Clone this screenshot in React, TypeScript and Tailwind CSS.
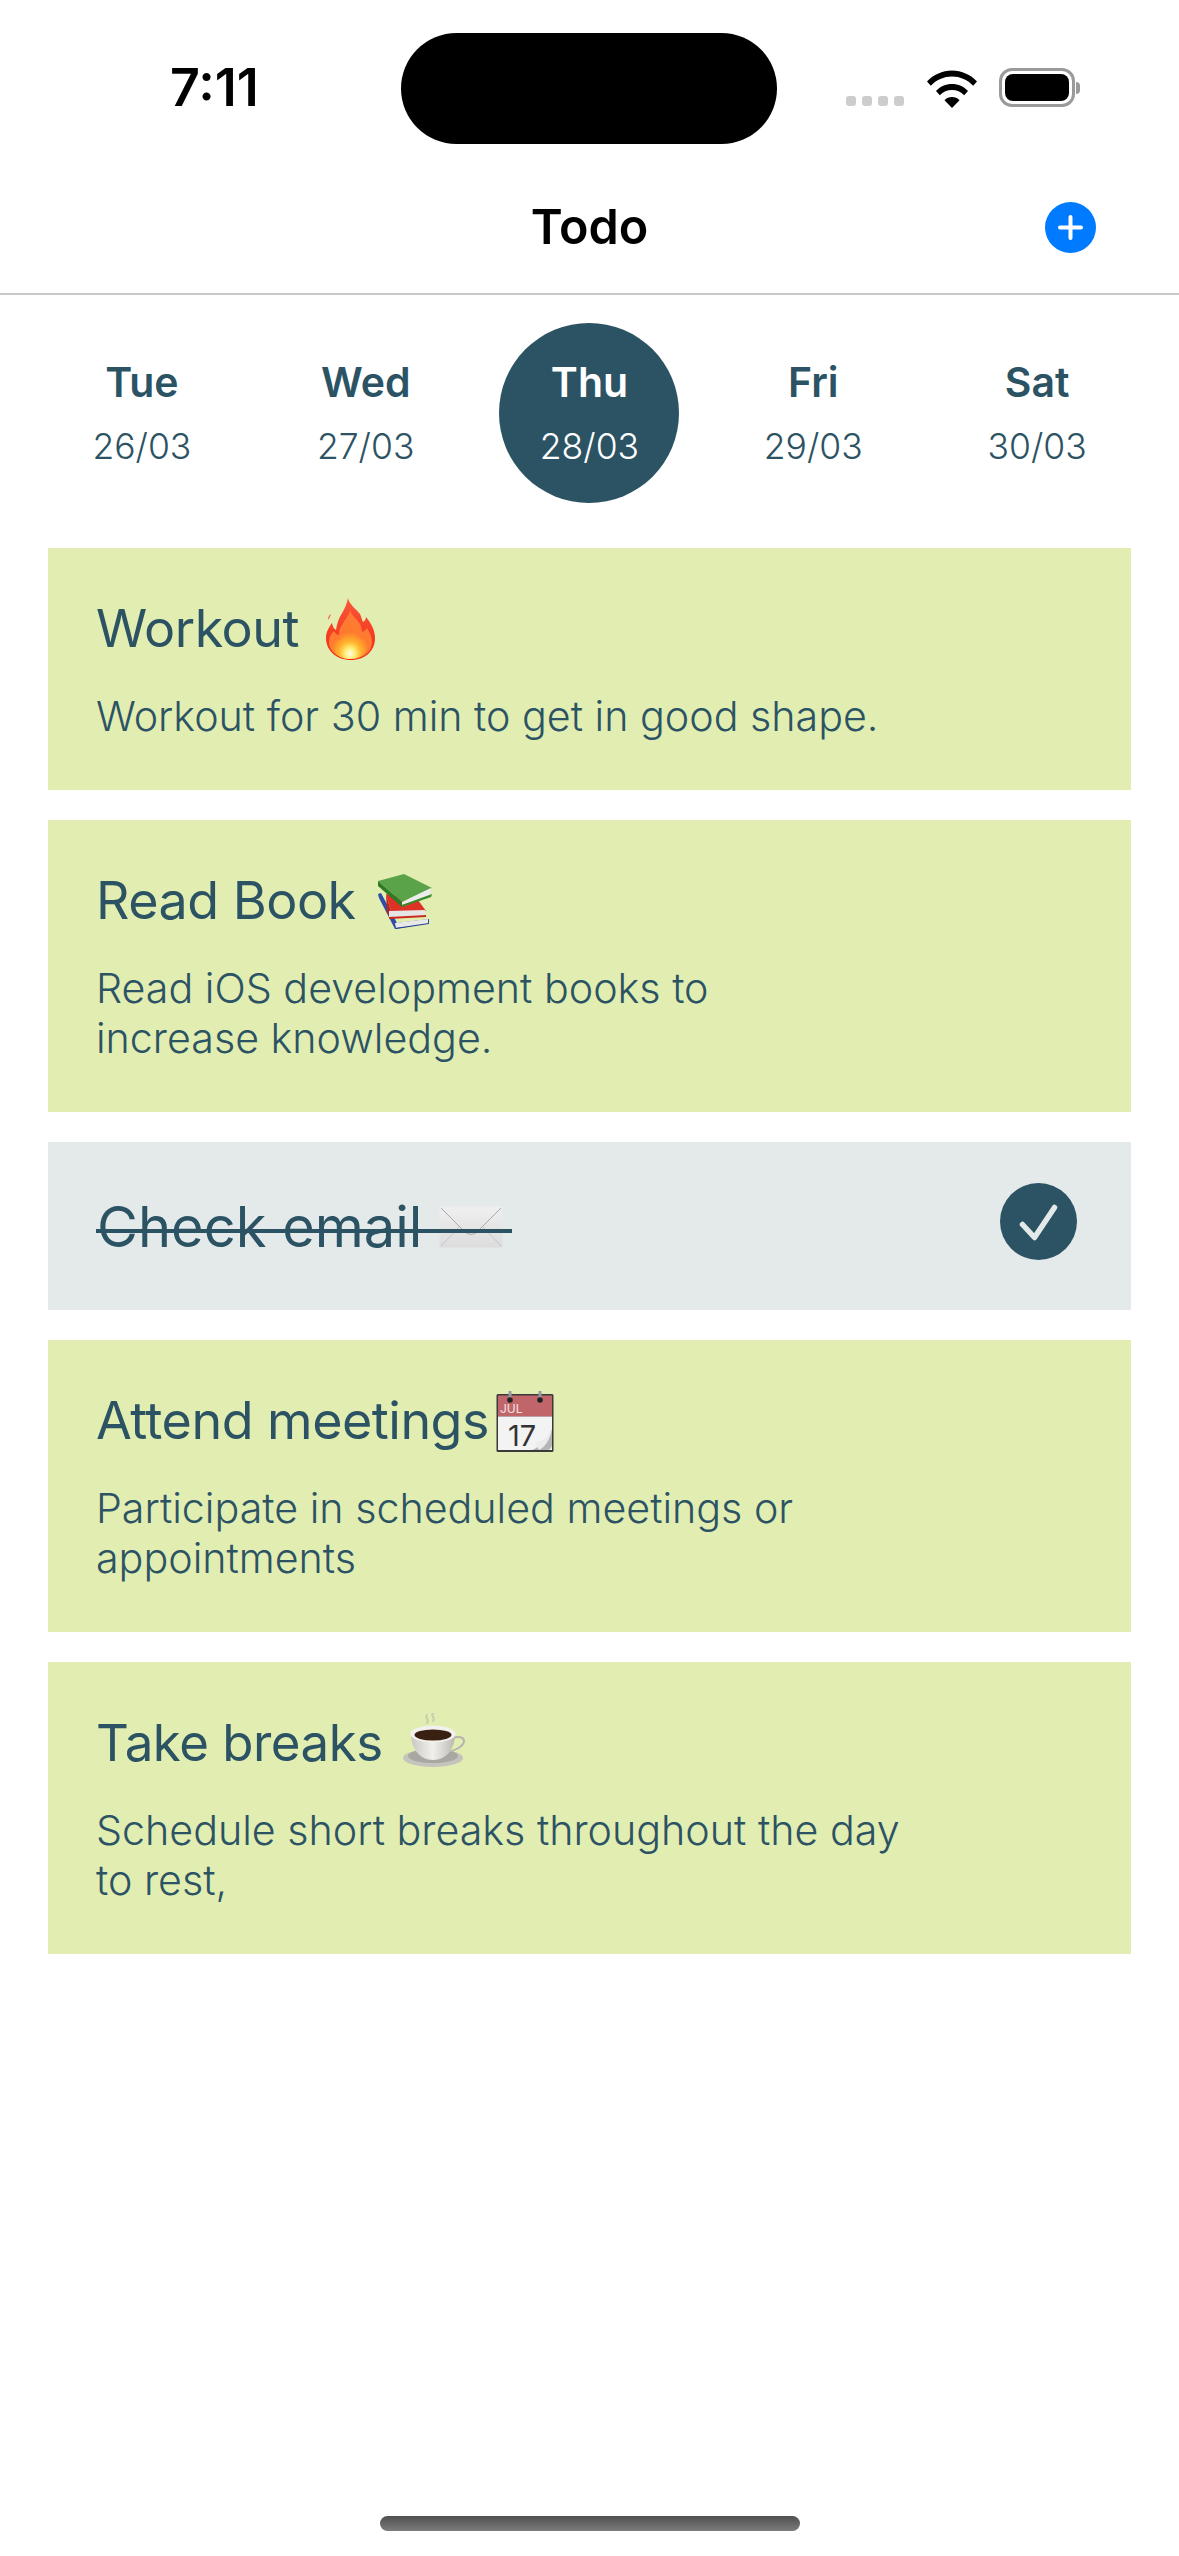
function Fire() {
  return (
    <svg width="49" height="62" viewBox="0 0 49 62" className="shrink-0">
      <defs>
        <radialGradient id="fcore" cx="0.5" cy="0.86" r="0.55">
          <stop offset="0" stopColor="#fffdf0" />
          <stop offset="0.25" stopColor="#ffef7a" />
          <stop offset="0.55" stopColor="#ffb52e" />
          <stop offset="1" stopColor="#ff7a2b" />
        </radialGradient>
        <linearGradient id="fout" x1="0" y1="0" x2="0" y2="1">
          <stop offset="0" stopColor="#f9583a" />
          <stop offset="1" stopColor="#f32a10" />
        </linearGradient>
      </defs>
      <path d="M5 16c-1 3-2 5-3 6 0-3 1-5 3-6z" fill="#f7603a" />
      <path d="M22 0c1 6 7 10 12 16 1 2 2 6 3 8 2-1 3-3 3-5 5 6 9 13 9 21 0 13-10 22-24 22S0 53 0 40c0-6 3-11 6-15 1 4 2 6 4 7 1-6 2-10 5-15 3-5 6-11 7-17z" fill="url(#fout)" />
      <path d="M24 11c0 5 6 9 10 15 1 3 2 5 2 8 2-1 4-2 5-4 3 5 5 9 5 14 0 10-9 17-21 17S3 54 3 44c0-5 2-8 5-11 1 2 3 4 5 4 0-8 5-13 8-18 2-3 3-5 3-8z" fill="#ff7a33" />
      <path d="M24 22c1 5 5 8 8 13 1 2 2 4 2 6 2-1 3-2 4-4 2 3 4 6 4 10 0 8-8 14-18 14S6 55 6 47c0-3 2-6 4-8 1 2 2 3 4 3 0-7 4-11 7-15 2-2 3-3 3-5z" fill="url(#fcore)" />
    </svg>
  );
}

function Books() {
  return (
    <svg width="55" height="55" viewBox="0 0 55 55" className="shrink-0">
      <path d="M0 20l3-1 16 30 32-4v4L17 55 1 24z" fill="#2f4ea8" />
      <path d="M17 49l33-4v5l-32 4z" fill="#e9e9e9" />
      <path d="M17 54l34-5v1l-33 5z" fill="#24408f" />
      <path d="M8 20l32 6 8 11-34 4z" fill="#de3226" />
      <path d="M8 20l6 21v4l-5-6z" fill="#b8261c" />
      <path d="M11 37l36-1v6l-36 1z" fill="#e6e6e6" />
      <path d="M11 43l37-2v2l-37 2z" fill="#c92c20" />
      <path d="M0 7L26 0l28 14-30 14z" fill="#5ba348" />
      <path d="M0 7l24 21v5L0 12z" fill="#2f7a26" />
      <path d="M24 28l29-14-1 8-28 9z" fill="#ececec" />
      <path d="M24 31l30-11-1 3-29 10z" fill="#3a8a2d" />
    </svg>
  );
}

function Envelope() {
  return (
    <svg width="64" height="42" viewBox="0 0 64 42" className="shrink-0">
      <defs>
        <linearGradient id="env" x1="0" y1="0" x2="0" y2="1">
          <stop offset="0" stopColor="#efefef" />
          <stop offset="1" stopColor="#dcdcdc" />
        </linearGradient>
      </defs>
      <rect x="0.5" y="0.5" width="63" height="41" rx="1.5" fill="url(#env)" />
      <path d="M2 2l24 24c3 3 9 3 12 0L62 2" fill="none" stroke="#a9a9ad" strokeWidth="1" />
      <path d="M2 40l18-19M62 40L44 21" fill="none" stroke="#c4c4c6" strokeWidth="1" />
    </svg>
  );
}

function Calendar() {
  return (
    <svg width="58" height="61" viewBox="0 0 58 61" className="shrink-0">
      <rect x="0.5" y="3" width="57" height="58" rx="1.5" fill="#3a3a3a" />
      <rect x="2" y="4.500" width="54" height="21" fill="#c0666a" />
      <rect x="2" y="25.500" width="54" height="33.500" fill="#f3f3f3" />
      <rect x="12.500" y="0" width="3" height="8" fill="#9a9aa5" />
      <rect x="42.500" y="0" width="3" height="8" fill="#9a9aa5" />
      <circle cx="14" cy="9" r="2.800" fill="#222" />
      <circle cx="44" cy="9" r="2.800" fill="#222" />
      <text x="4" y="22" fontSize="12" fill="#f5e3e3" fontFamily="Inter, sans-serif">JUL</text>
      <text x="12" y="55" fontSize="29" fill="#333" fontFamily="Inter, sans-serif" fontWeight="400">17</text>
      <path d="M56 38v15c0 4-2 6-6 6H36c8-3 14-10 20-21z" fill="#b5b5b5" />
      <path d="M56 38c-4 8-10 12-17 14l4 7c6-3 11-10 13-21z" fill="#ececec" />
    </svg>
  );
}

function Coffee() {
  return (
    <svg width="62" height="54" viewBox="0 0 62 54" className="shrink-0 mb-[6px]">
      <defs>
        <linearGradient id="cup" x1="0" y1="0" x2="1" y2="0">
          <stop offset="0" stopColor="#c9c8c3" />
          <stop offset="0.5" stopColor="#f1f0ec" />
          <stop offset="1" stopColor="#b9b8b3" />
        </linearGradient>
      </defs>
      <ellipse cx="30" cy="45" rx="30" ry="9" fill="#c4c3be" />
      <ellipse cx="30" cy="43" rx="25" ry="7" fill="#a8a7a2" />
      <path d="M50 25c5-2 11-1 11 3 0 5-9 10-17 11" fill="none" stroke="#b5b4af" strokeWidth="2" />
      <path d="M8 21c0 14 8 26 22 26s22-12 22-26z" fill="url(#cup)" />
      <ellipse cx="30" cy="21" rx="22.500" ry="8.500" fill="#f2f1ed" />
      <ellipse cx="30" cy="22" rx="18.500" ry="5.500" fill="#3a2012" />
      <path d="M24 2c-3 3 3 4 0 8M30 0c-3 3 3 4 0 8" fill="none" stroke="#b9c2ae" strokeWidth="2" strokeLinecap="round" opacity="0.7" />
    </svg>
  );
}

function Wifi() {
  return (
    <svg width="50" height="38" viewBox="0 0 50 38">
      <path d="M0 11.500C6.500 4.500 15.300 0.500 25 0.500s18.500 4 25 11l-3.800 4.200C40.700 9.800 33.200 6.400 25 6.400S9.300 9.800 3.800 15.700z" fill="#000" />
      <path d="M9 21C13 16.600 18.800 14 25 14s12 2.600 16 7l-3.800 4.200C34 21.900 29.700 20 25 20s-9 1.900-12.200 5.200z" fill="#000" />
      <path d="M17.500 30.200C19.400 28.200 22.100 27 25 27s5.600 1.200 7.500 3.200L25 38z" fill="#000" />
    </svg>
  );
}

const days = [
  { name: "Tue", date: "26/03" },
  { name: "Wed", date: "27/03" },
  { name: "Thu", date: "28/03", active: true },
  { name: "Fri", date: "29/03" },
  { name: "Sat", date: "30/03" },
];

function Card({ title, icon, titleClass, lines }: { title: string; icon: React.ReactNode; titleClass: string; lines: string[] }) {
  return (
    <div className="bg-[#e2edb1] pl-[48px] pr-[48px] pt-[47px] pb-[49px] text-[#2c5364]">
      <div className="flex items-center h-[68px]">
        <span className={`leading-[68px] font-normal tracking-[-0.5px] ${titleClass}`}>{title}</span>
        {icon}
      </div>
      <div className="mt-[28px] text-[41.2px] leading-[50px] font-light">
        {lines.map((l) => (
          <div key={l} className="whitespace-nowrap">{l}</div>
        ))}
      </div>
    </div>
  );
}

export default function App() {
  return (
    <div className="w-[1179px] h-[2556px] bg-white flex flex-col font-['Inter',sans-serif] overflow-hidden">
      <div className="flex items-start h-[177px] shrink-0">
        <div className="w-[401px] pt-[60px] pl-[170px] text-[52px] leading-[56px] font-semibold text-black">7:11</div>
        <div className="mt-[33px] w-[376px] h-[111px] rounded-[56px] bg-black" />
        <div className="flex items-end pt-[68px] pl-[69px]">
          <div className="flex gap-[6px] mb-[1px]">
            <span className="w-[10px] h-[10px] rounded-[3px] bg-[#cdcdcd]" />
            <span className="w-[10px] h-[10px] rounded-[3px] bg-[#cdcdcd]" />
            <span className="w-[10px] h-[10px] rounded-[3px] bg-[#cdcdcd]" />
            <span className="w-[10px] h-[10px] rounded-[3px] bg-[#cdcdcd]" />
          </div>
          <div className="ml-[23px] mb-[-1px]"><Wifi /></div>
          <div className="ml-[22px] flex items-center">
            <div className="w-[76px] h-[39px] rounded-[13px] border-[3px] border-[#9a9a9a] p-[3px]">
              <div className="w-full h-full rounded-[8px] bg-black" />
            </div>
            <div className="w-[4px] h-[12px] rounded-r-[4px] bg-[#9a9a9a] ml-[1px]" />
          </div>
        </div>
      </div>

      <div className="relative h-[118px] shrink-0 border-b-[2px] border-[#c8c8c8] flex items-start justify-center">
        <span className="mt-[20px] text-[48.5px] leading-[60px] font-semibold text-black">Todo</span>
        <div className="absolute left-[1045px] top-[25px] w-[51px] h-[51px] rounded-full bg-[#007aff] flex items-center justify-center">
          <svg width="25" height="25" viewBox="0 0 25 25">
            <path d="M12.500 2v21M2 12.500h21" stroke="#fff" strokeWidth="4" strokeLinecap="round" />
          </svg>
        </div>
      </div>

      <div className="grid grid-cols-5 pl-[30px] pr-[30px] mt-[28px] h-[180px] shrink-0">
        {days.map((d) => (
          <div key={d.name} className="flex justify-center">
            <div className={`w-[180px] h-[180px] rounded-full flex flex-col items-center pt-[34px] ${d.active ? "bg-[#2c5364] text-white" : "text-[#2c5364]"}`}>
              <span className="text-[41px] leading-[50px] font-semibold">{d.name}</span>
              <span className="mt-[15px] text-[35.5px] leading-[50px] font-light">{d.date}</span>
            </div>
          </div>
        ))}
      </div>

      <div className="flex flex-col gap-[30px] ml-[48px] w-[1083px] mt-[45px]">
        <Card title="Workout" titleClass="text-[52px] mr-[27px]" icon={<Fire />} lines={["Workout for 30 min to get in good shape."]} />
        <Card title="Read Book" titleClass="text-[52px] mr-[22px]" icon={<Books />} lines={["Read iOS development books to", "increase knowledge."]} />
        <div className="bg-[#e4eaea] h-[168px] pl-[49px] pr-[54px] flex items-center justify-between text-[#2c5364]">
          <div className="relative flex items-center gap-[17px] mt-[1px]">
            <span className="text-[56px] leading-[68px]">Check email</span>
            <Envelope />
            <div className="absolute left-[-1px] right-[-9px] top-[36px] h-[4px] bg-[#2c5364]" />
          </div>
          <div className="w-[77px] h-[77px] rounded-full bg-[#2c5364] flex items-center justify-center mt-[-9px]">
            <svg width="40" height="40" viewBox="0 0 40 40">
              <path d="M3.500 22.500L15.500 35.500L35.500 5.500" fill="none" stroke="#e4eaea" strokeWidth="5.500" strokeLinecap="round" strokeLinejoin="round" />
            </svg>
          </div>
        </div>
        <Card title="Attend meetings" titleClass="text-[52px] mr-[7px]" icon={<Calendar />} lines={["Participate in scheduled meetings or", "appointments"]} />
        <Card title="Take breaks" titleClass="text-[51px] mr-[20px]" icon={<Coffee />} lines={["Schedule short breaks throughout the day", "to rest,"]} />
      </div>

      <div className="mt-auto mb-[25px] mx-auto w-[420px] h-[15px] rounded-full bg-gradient-to-b from-[#505050] to-[#7c7c7c]" />
    </div>
  );
}
